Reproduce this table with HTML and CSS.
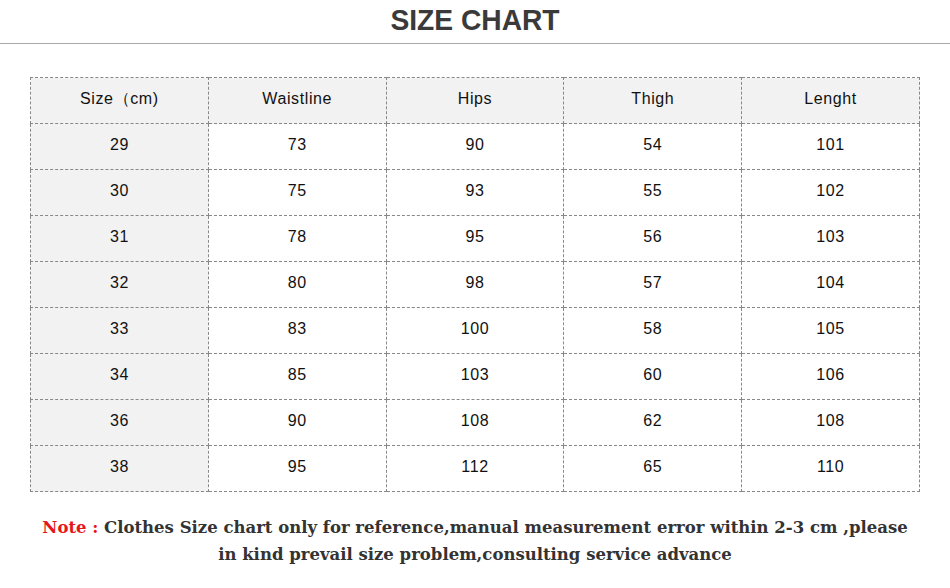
FILE: index.html
```html
<!DOCTYPE html>
<html>
<head>
<meta charset="utf-8">
<link rel="stylesheet" href="styles.css">
</head>
<body>
<header class="head"><h1 class="title">SIZE CHART</h1></header>
<table class="chart">
<thead>
<tr><th class="first">Size（cm)</th><th>Waistline</th><th>Hips</th><th>Thigh</th><th>Lenght</th></tr>
</thead>
<tbody>
<tr><td class="first">29</td><td>73</td><td>90</td><td>54</td><td>101</td></tr>
<tr><td class="first">30</td><td>75</td><td>93</td><td>55</td><td>102</td></tr>
<tr><td class="first">31</td><td>78</td><td>95</td><td>56</td><td>103</td></tr>
<tr><td class="first">32</td><td>80</td><td>98</td><td>57</td><td>104</td></tr>
<tr><td class="first">33</td><td>83</td><td>100</td><td>58</td><td>105</td></tr>
<tr><td class="first">34</td><td>85</td><td>103</td><td>60</td><td>106</td></tr>
<tr><td class="first">36</td><td>90</td><td>108</td><td>62</td><td>108</td></tr>
<tr><td class="first">38</td><td>95</td><td>112</td><td>65</td><td>110</td></tr>
</tbody>
</table>
<p class="note"><span class="red">Note :</span> Clothes Size chart only for reference,manual measurement error within 2-3 cm ,please<br>in kind prevail size problem,consulting service advance</p>
</body>
</html>
```
FILE: styles.css
```css
html, body { margin: 0; padding: 0; background: #fff; }
body { width: 950px; font-family: "Liberation Sans", Arial, sans-serif; }
.head {
  height: 43px;
  border-bottom: 1px solid #aaa;
  display: flex;
  align-items: center;
  justify-content: center;
}
.title {
  margin: 0 0 4px;
  font-size: 30px;
  font-weight: bold;
  color: #3a3a3a;
  line-height: 1;
  transform: scaleX(0.94);
}
.chart {
  margin: 33px 0 0 30px;
  border-collapse: collapse;
  width: 890px;
  table-layout: fixed;
}
.chart th, .chart td {
  border: 1px dashed #888;
  height: 42px;
  padding: 0 0 3px;
  text-align: center;
  font-size: 16px;
  letter-spacing: 0.6px;
  font-weight: normal;
  color: #111;
}
.chart th { background: #f2f2f2; }
.chart td.first { background: #f2f2f2; }
.note {
  margin: 22px 0 0;
  text-align: center;
  font-family: "DejaVu Serif", Georgia, serif;
  font-weight: bold;
  font-size: 16.5px;
  line-height: 27px;
  color: #333;
}
.red { color: #e8141b; }
```
